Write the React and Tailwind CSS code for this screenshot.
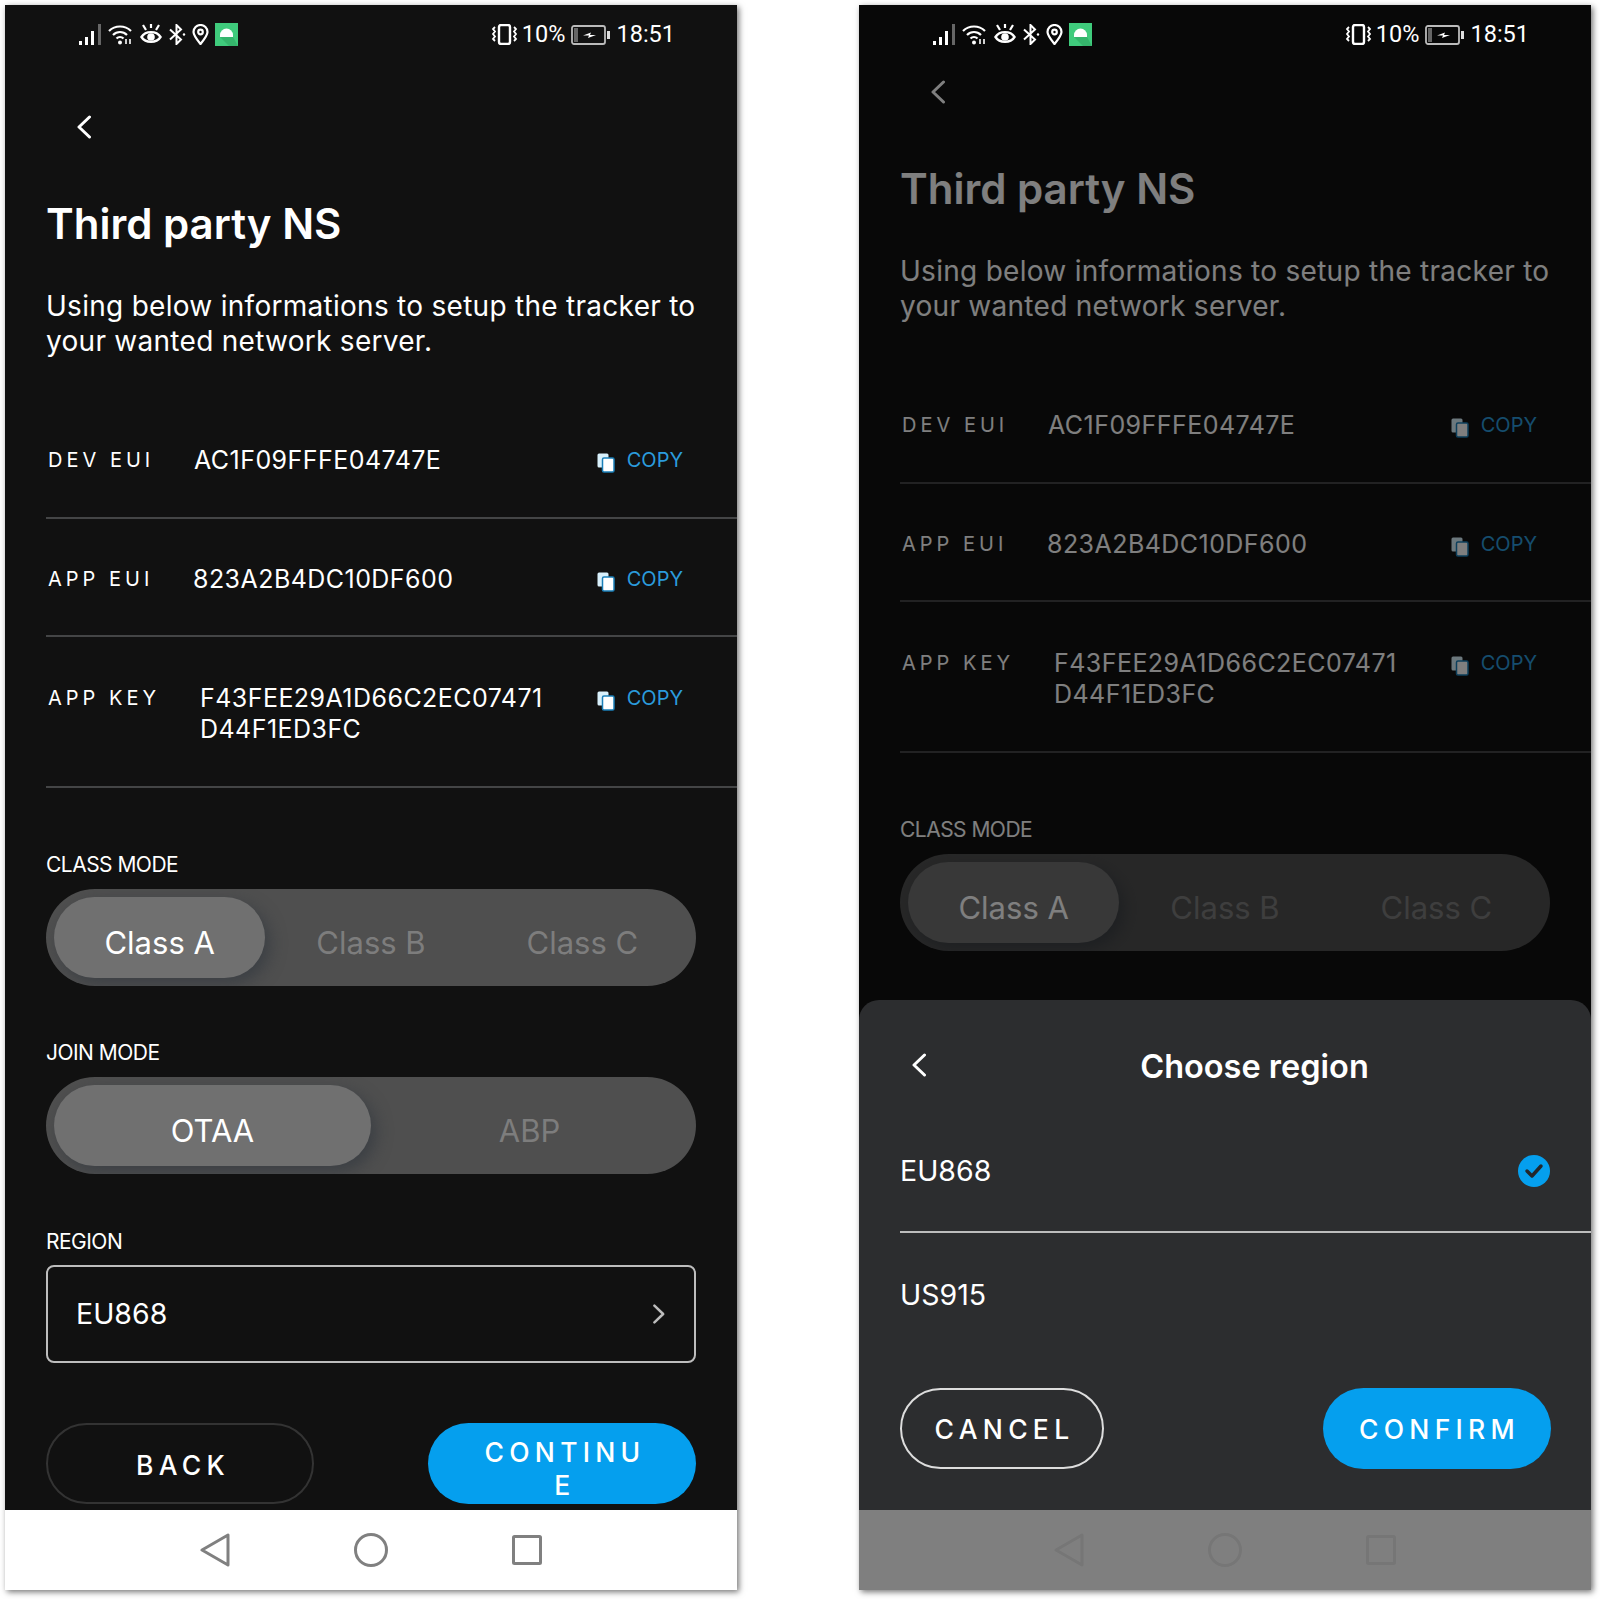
const FONT = "font-['Inter','Noto_Sans',sans-serif]";

function Chevron({ className }) {
  return (
    <svg viewBox="0 0 16 24" className={className} fill="none" stroke="currentColor" strokeWidth="3" strokeLinecap="round" strokeLinejoin="round">
      <path d="M13.5 2 3 12l10.5 10" />
    </svg>
  );
}

function StatusBar() {
  return (
    <div className="relative z-20 flex h-[58px] shrink-0 items-center justify-between pl-[74px] pr-[62px] text-white">
      <div className="flex items-center gap-[6px]">
        <svg width="23" height="21" viewBox="0 0 23 21" fill="#fff">
          <rect x="0" y="17" width="3" height="4" />
          <rect x="6" y="13" width="3" height="8" />
          <rect x="12" y="7" width="3" height="14" />
          <rect x="19" y="0" width="3" height="21" fill="#666" />
        </svg>
        <svg width="26" height="21" viewBox="0 0 26 21" fill="none" stroke="#fff" strokeWidth="2.2">
          <path d="M1 7c6-6 16-6 22 0" />
          <path d="M5 11c4-4 10-4 14 0" />
          <path d="M8.500 14.500c2-2 5-2 7 0" />
          <circle cx="12" cy="18.500" r="2" fill="#fff" stroke="none" />
          <path d="M18 15v5M22 15v5" strokeWidth="1.600" />
        </svg>
        <svg width="22" height="23" viewBox="0 0 22 23" fill="none" stroke="#fff" strokeWidth="2.400">
          <path d="M1.500 14c4-6.500 15-6.500 19 0-4 6.500-15 6.500-19 0z" />
          <circle cx="11" cy="14" r="3.800" fill="#fff" stroke="none" />
          <path d="M3 2l3 5M19 2l-3 5M11 1v4" strokeWidth="2.200" />
        </svg>
        <svg width="18" height="21" viewBox="0 0 18 21" fill="none" stroke="#fff" strokeWidth="2">
          <path d="M2 5.500l11 10-4.500 4.500V1L13 5.500l-11 10" />
          <circle cx="16" cy="10.500" r="1.200" fill="#fff" stroke="none" />
        </svg>
        <svg width="17" height="21" viewBox="0 0 17 21" fill="none" stroke="#fff" strokeWidth="2.200">
          <path d="M8.500 20C4 14.500 1.500 11.500 1.500 8a7 7 0 0 1 14 0c0 3.500-2.500 6.500-7 12z" />
          <circle cx="8.500" cy="8" r="2.300" />
        </svg>
        <svg width="23" height="23" viewBox="0 0 23 23">
          <rect width="23" height="23" fill="#3fcb7c" />
          <path d="M5 12a6.500 6.500 0 0 1 13 0z" fill="#fff" />
          <rect x="5" y="12" width="13" height="2" fill="#fff" />
          <path d="M5 14h13l5 9H14z" fill="#35b56c" />
        </svg>
      </div>
      <div className="flex items-center pt-[1px] font-['Roboto',sans-serif] text-[23.500px] leading-none">
        <svg width="27" height="21" viewBox="0 0 27 21" fill="none" stroke="#fff" strokeWidth="2.400">
          <rect x="8" y="1" width="11" height="19" rx="2" />
          <path d="M4 3l-2 2 2 2.500-2 2.500 2 2.500-2 2.500 2 2M23 3l2 2-2 2.500 2 2.500-2 2.500 2 2.500-2 2" strokeWidth="1.800" />
        </svg>
        <span className="ml-[4px]">10%</span>
        <svg className="ml-[6px]" width="39" height="20" viewBox="0 0 39 20" fill="none">
          <rect x="1" y="1" width="33" height="18" rx="2" stroke="#bbb" strokeWidth="1.800" />
          <rect x="3" y="3" width="4" height="14" fill="#666" />
          <rect x="36" y="6" width="3" height="8" fill="#ddd" />
          <path d="M12 10.500l8-3-1 2.500h6l-8 3 1-2.500z" fill="#fff" />
        </svg>
        <span className="ml-[6px]">18:51</span>
      </div>
    </div>
  );
}

function CopyIcon() {
  return (
    <svg className="mt-[4px]" width="18" height="20" viewBox="0 0 18 20">
      <rect x="0.500" y="0.500" width="11" height="14" rx="1.500" fill="#d8f0fb" />
      <rect x="5.500" y="5" width="11.500" height="14" rx="1.500" fill="#fff" stroke="#1a7fb8" strokeWidth="1.500" />
    </svg>
  );
}

function InfoRow({ label, value, gap, extra }) {
  return (
    <div className={`flex items-start border-b-2 border-[#444546] pl-[2px] pr-[54px] ${extra}`}>
      <span className={`shrink-0 text-[20px] uppercase leading-[31px] tracking-[0.2em] text-white ${gap}`}>{label}</span>
      <span className="w-[352px] shrink-0 break-all text-[25px] leading-[31px] tracking-[0.018em] text-white">{value}</span>
      <span className="ml-auto flex shrink-0 items-center leading-[31px]">
        <CopyIcon />
        <span className="ml-[12px] text-[20px] text-[#2b9bdc]">COPY</span>
      </span>
    </div>
  );
}

function Segmented({ options, cols }) {
  return (
    <div className={`grid h-[97px] overflow-hidden rounded-full bg-[#4f4f4f] p-[8px] ${cols}`}>
      {options.map((o, i) => (
        <div
          key={o}
          className={`flex items-center justify-center rounded-full pt-[9px] text-[31px] leading-none ${
            i === 0 ? "bg-[#707070] text-white shadow-[5px_6px_16px_rgba(52,58,64,0.75)]" : "text-[#7d7d7d]"
          }`}
        >
          {o}
        </div>
      ))}
    </div>
  );
}

function FieldLabel({ children, className }) {
  return <div className={`text-[21px] uppercase leading-[24px] tracking-[-0.025em] text-white ${className}`}>{children}</div>;
}

function NavBar({ dimmed }) {
  // under the scrim the icons end up just a shade darker than the grey bar
  const stroke = dimmed ? "#ececec" : "#808080";
  return (
    <div className="flex h-[80px] shrink-0 items-center justify-center gap-[124px] bg-white pb-[1px]">
      <svg width="30" height="34" viewBox="0 0 30 34" fill="none" stroke={stroke} strokeWidth="3" strokeLinejoin="round">
        <path d="M28 2v30L2 17z" />
      </svg>
      <svg width="34" height="34" viewBox="0 0 34 34" fill="none" stroke={stroke} strokeWidth="3">
        <circle cx="17" cy="17" r="15.500" />
      </svg>
      <svg width="30" height="30" viewBox="0 0 30 30" fill="none" stroke={stroke} strokeWidth="3">
        <rect x="1.500" y="1.500" width="27" height="27" rx="1" />
      </svg>
    </div>
  );
}

function Form({ top, covered }) {
  return (
    <div className={`flex-1 overflow-hidden pl-[41px] ${top}`}>
      <div className="flex h-[34px] items-center pl-[30px] text-white">
        <Chevron className="h-[24px] w-[16px]" />
      </div>
      <div className="mr-[41px]">
        <h1 className="mt-[56px] text-[42px] font-semibold leading-[48px] text-white">Third party NS</h1>
        <p className="mt-[41px] text-[28px] leading-[35px] tracking-[0.01em] text-white">
          Using below informations to setup the tracker to your wanted network server.
        </p>
      </div>
      <div className="mt-[42px]">
        <InfoRow label="Dev EUI" value="AC1F09FFFE04747E" gap="w-[146px]" extra="pt-[44px] pb-[41px]" />
        <InfoRow label="App EUI" value="823A2B4DC10DF600" gap="w-[145px]" extra="pt-[45px] pb-[40px]" />
        <InfoRow label="App key" value="F43FEE29A1D66C2EC07471D44F1ED3FC" gap="w-[152px]" extra="pt-[46px] pb-[41px]" />
      </div>
      <div className="mr-[41px]">
        <FieldLabel className="mt-[65px] mb-[12px]">Class mode</FieldLabel>
        <Segmented options={["Class A", "Class B", "Class C"]} cols="grid-cols-3" />
        {/* the rest of the form sits behind the region sheet */}
        {!covered && (
          <>
            <FieldLabel className="mt-[55px] mb-[12px]">Join mode</FieldLabel>
            <Segmented options={["OTAA", "ABP"]} cols="grid-cols-2" />
            <FieldLabel className="mt-[56px] mb-[11px]">Region</FieldLabel>
            <div className="flex h-[98px] items-center justify-between rounded-[8px] border-2 border-[#bdbdbd] pl-[28px] pr-[28px] text-[28.500px] text-white">
              <span>EU868</span>
              <Chevron className="h-[20px] w-[14px] rotate-180 text-[#bdbdbd]" />
            </div>
            <div className="mt-[60px] flex justify-between">
              <button className="h-[81px] w-[268px] rounded-full border-2 border-[#333] pl-[6px] pt-[4px] text-[26.500px] font-medium tracking-[0.2em] text-white">
                BACK
              </button>
              <button className="h-[81px] w-[268px] break-all rounded-full bg-[#059fee] pl-[56px] pr-[50px] pt-[10px] text-[26.500px] font-medium leading-[33px] tracking-[0.2em] text-white">
                CONTINUE
              </button>
            </div>
          </>
        )}
      </div>
    </div>
  );
}

function RegionSheet() {
  return (
    <div className="absolute inset-x-0 bottom-[80px] z-10 h-[510px] rounded-t-[20px] bg-[#2c2d2f] pl-[41px] text-white">
      <div className="relative mr-[41px] flex h-[172px] text-white">
        <Chevron className="absolute left-[11px] top-[53px] h-[24px] w-[16px]" />
        <h2 className="mt-[47px] w-full pl-[59px] text-center text-[32.500px] font-semibold leading-[40px]">Choose region</h2>
      </div>
      <div className="-mt-[19px] flex h-[80px] items-start justify-between border-b-2 border-[#bdbdbd] pr-[40px]">
        <span className="text-[28.500px] leading-[36px]">EU868</span>
        <svg className="mr-[1px] mt-[2px]" width="32" height="32" viewBox="0 0 32 32">
          <circle cx="16" cy="16" r="16" fill="#059fee" />
          <path d="M9 16l5 5 9-10" fill="none" stroke="#23272b" strokeWidth="3.500" strokeLinecap="round" strokeLinejoin="round" />
        </svg>
      </div>
      <div className="mt-[44px] text-[28.500px] leading-[36px]">US915</div>
      <div className="mr-[40px] mt-[75px] flex justify-between">
        <button className="h-[81px] w-[204px] rounded-full border-2 border-[#dddddd] pl-[5px] pt-[2px] text-[26.500px] font-medium tracking-[0.2em]">CANCEL</button>
        <button className="h-[81px] w-[228px] rounded-full bg-[#059fee] pl-[5px] pt-[2px] text-[26.500px] font-medium tracking-[0.2em]">CONFIRM</button>
      </div>
    </div>
  );
}

function Phone({ dimmed }) {
  return (
    <div className={`relative flex h-[1585px] w-[732px] flex-col overflow-hidden bg-[#111111] shadow-[2px_2px_6px_rgba(0,0,0,0.55)] ${FONT}`}>
      <StatusBar />
      <Form top={dimmed ? "pt-[12px]" : "pt-[47px]"} covered={dimmed} />
      <NavBar dimmed={dimmed} />
      {dimmed && <div className="absolute inset-0 bg-black/50" />}
      {dimmed && <RegionSheet />}
    </div>
  );
}

export default function App() {
  return (
    <div className="flex h-[1599px] w-[1600px] gap-[122px] bg-white pl-[5px] pt-[5px]">
      <Phone />
      <Phone dimmed />
    </div>
  );
}
